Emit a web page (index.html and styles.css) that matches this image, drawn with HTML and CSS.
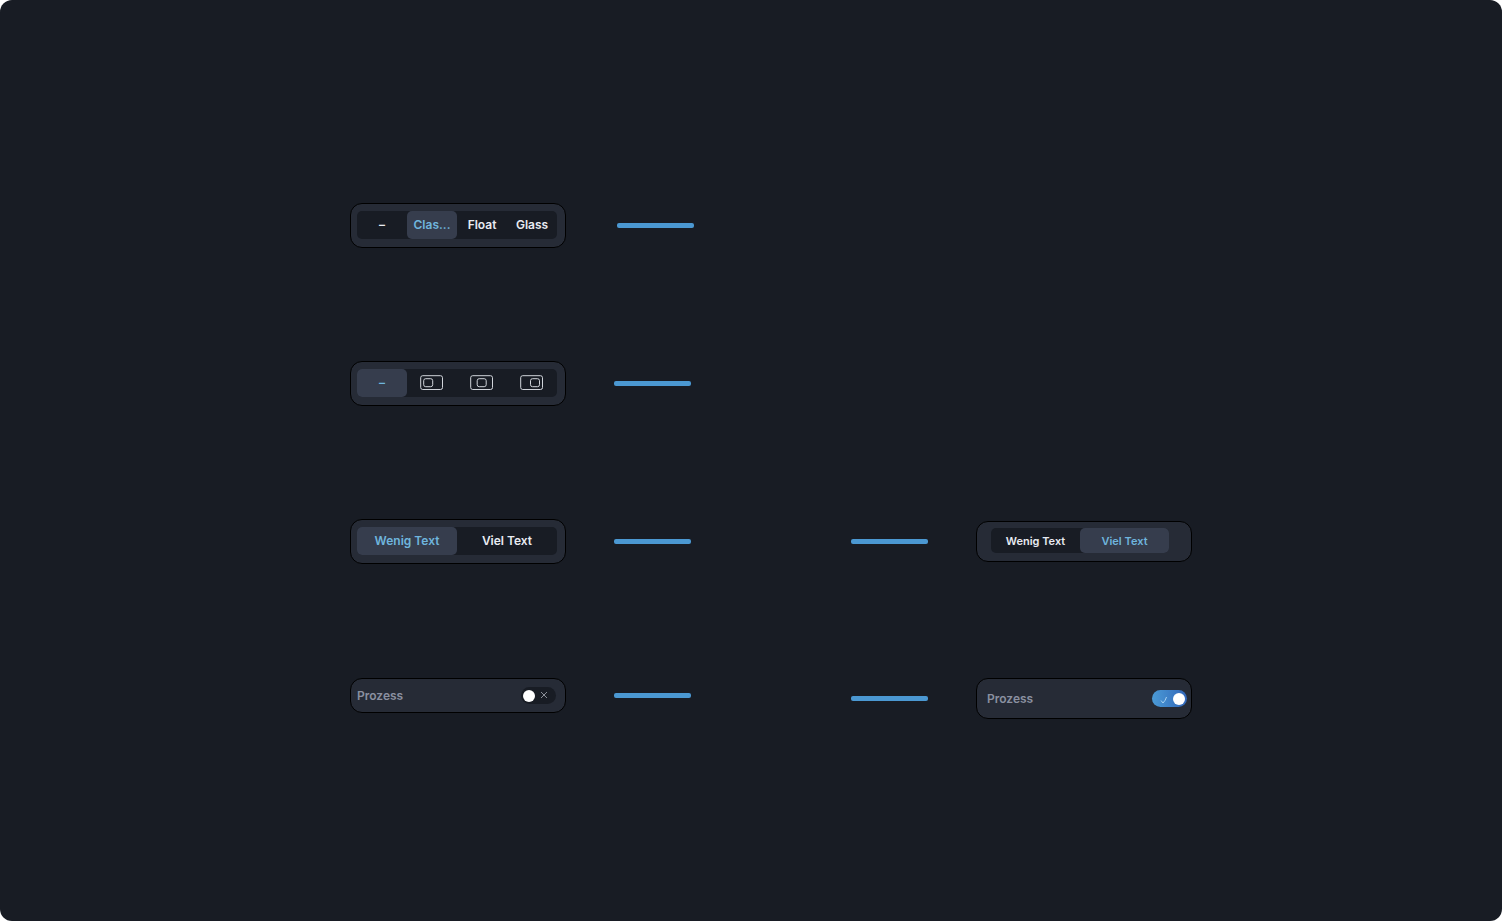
FILE: index.html
```html
<!DOCTYPE html>
<html lang="de">
<head>
  <meta charset="utf-8">
  <title>Controls</title>
  <link rel="stylesheet" href="styles.css">
</head>

<body>
  <main class="board">

    <!-- Style -->
    <div class="row">
      <div class="group wide">
        <div class="card">
          <div class="segments" role="radiogroup" aria-label="Stil">
            <label class="segment"><input type="radio" name="style"><span>–</span></label>
            <label class="segment"><input type="radio" name="style" checked><span>Clas...</span></label>
            <label class="segment"><input type="radio" name="style"><span>Float</span></label>
            <label class="segment"><input type="radio" name="style"><span>Glass</span></label>
          </div>
        </div>
        <div class="line"></div>
      </div>
    </div>

    <!-- Position -->
    <div class="row">
      <div class="group">
        <div class="card">
          <div class="segments" role="radiogroup" aria-label="Position">
            <label class="segment"><input type="radio" name="position" checked><span>–</span></label>
            <label class="segment">
              <input type="radio" name="position" aria-label="Links">
              <svg width="24" height="16" viewBox="0 0 24 16"><rect x="0.700" y="0.700" width="21.800" height="13.800" rx="2"/><rect x="3.700" y="3.700" width="9" height="8" rx="2"/></svg>
            </label>
            <label class="segment">
              <input type="radio" name="position" aria-label="Mitte">
              <svg width="24" height="16" viewBox="0 0 24 16"><rect x="0.700" y="0.700" width="21.800" height="13.800" rx="2"/><rect x="7.200" y="3.700" width="9" height="8" rx="2"/></svg>
            </label>
            <label class="segment">
              <input type="radio" name="position" aria-label="Rechts">
              <svg width="24" height="16" viewBox="0 0 24 16"><rect x="0.700" y="0.700" width="21.800" height="13.800" rx="2"/><rect x="10.500" y="3.700" width="9" height="8" rx="2"/></svg>
            </label>
          </div>
        </div>
        <div class="line"></div>
      </div>
    </div>

    <!-- Text amount -->
    <div class="row center">
      <div class="group">
        <div class="card">
          <div class="segments" role="radiogroup" aria-label="Textmenge">
            <label class="segment"><input type="radio" name="text-a" checked><span>Wenig Text</span></label>
            <label class="segment"><input type="radio" name="text-a"><span>Viel Text</span></label>
          </div>
        </div>
        <div class="line"></div>
      </div>
      <div class="group">
        <div class="line"></div>
        <div class="card inset">
          <div class="segments small" role="radiogroup" aria-label="Textmenge">
            <label class="segment"><input type="radio" name="text-b"><span>Wenig Text</span></label>
            <label class="segment"><input type="radio" name="text-b" checked><span>Viel Text</span></label>
          </div>
        </div>
      </div>
    </div>

    <!-- Process -->
    <div class="row">
      <div class="group">
        <div class="card toggle-card">
          <label for="process-off">Prozess</label>
          <span class="toggle">
            <input type="checkbox" id="process-off">
            <svg class="cross" width="8" height="8" viewBox="0 0 8 8"><path d="M1 1l6 6M7 1l-6 6"/></svg>
          </span>
        </div>
        <div class="line"></div>
      </div>
      <div class="group">
        <div class="line"></div>
        <div class="card toggle-card tall">
          <label for="process-on">Prozess</label>
          <span class="toggle">
            <input type="checkbox" id="process-on" checked>
            <svg class="check" width="8" height="8" viewBox="0 0 8 8"><path d="M1 4.500l2 2.500q2.500-2.500 3.500-6"/></svg>
          </span>
        </div>
      </div>
    </div>

  </main>
</body>
</html>
```

FILE: styles.css
```css
* {
  box-sizing: border-box;
}

html {
  background-color: white;
}

body {
  margin: 0;
  font-family: Inter, sans-serif;
  font-size: 12px;
  font-weight: 600;
  line-height: 16px;
  color: #e8ebf2;
}

.board {
  min-height: 100vh;
  padding: 203px 310px 0 350px;
  border-radius: 12px;
  background-color: #181c24;
  display: grid;
  grid-template-rows: 158px 158px 159px 158px;
  align-content: start;
}

/* Rows */
.row {
  display: flex;
  justify-content: space-between;
  align-items: flex-start;
}

.row.center {
  height: 45px;
  align-items: center;
}

.group {
  display: flex;
  align-items: center;
  gap: 48px;
}

.group.wide {
  gap: 51px;
}

.line {
  width: 77px;
  height: 5px;
  border-radius: 2px;
  background-color: #4b98d2;
}

/* Cards */
.card {
  width: 216px;
  padding: 7px 8px 8px 6px;
  border: 1px solid black;
  border-radius: 12px;
  background-color: #262b36;
}

.card.inset {
  padding: 6px 22px 8px 14px;
}

/* Segmented control */
.segments {
  height: 28px;
  border-radius: 5px;
  background-color: #181c24;
  display: flex;
}

.segments.small {
  height: 25px;
  font-size: 11px;
}

.segment {
  position: relative;
  flex: 1 1 0;
  min-width: 0;
  padding: 0 4px;
  border-radius: 5px;
  display: flex;
  align-items: center;
  justify-content: center;
  white-space: nowrap;
  cursor: pointer;
}

.segment input {
  position: absolute;
  inset: 0;
  margin: 0;
  opacity: 0;
}

.segment:has(input:checked) {
  background-color: #363d4d;
  color: #6fb5dd;
}

.segment svg {
  flex: none;
  fill: none;
  stroke: #d0d4da;
}

/* Toggle */
.toggle-card {
  height: 35px;
  padding: 0 9px 0 6px;
  color: #8a90a0;
  display: flex;
  align-items: center;
  justify-content: space-between;
}

.toggle-card.tall {
  height: 41px;
  padding: 0 4px 0 10px;
}

.toggle {
  position: relative;
  display: flex;
}

.toggle input {
  appearance: none;
  width: 35px;
  height: 17px;
  margin: 0;
  padding: 0 2px;
  border-radius: 9px;
  background-color: #181c24;
  display: flex;
  align-items: center;
  cursor: pointer;
}

.toggle input::before {
  content: "";
  width: 12px;
  height: 12px;
  border-radius: 50%;
  background-color: white;
}

.toggle input:checked {
  justify-content: flex-end;
  background: linear-gradient(90deg, #4b9bd6, #3065b8);
}

.toggle svg {
  position: absolute;
  top: 4px;
  fill: none;
  stroke: #8b8f98;
  pointer-events: none;
}

.toggle .cross {
  right: 8px;
}

.toggle .check {
  top: 6px;
  left: 8px;
  stroke: #a9d3f2;
}
```
